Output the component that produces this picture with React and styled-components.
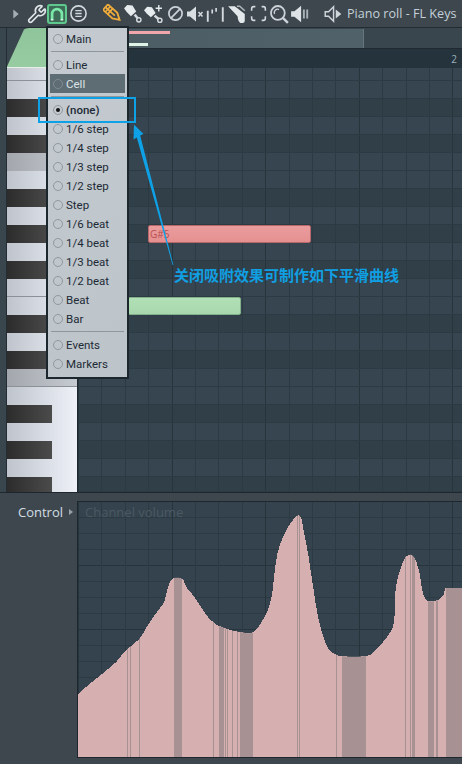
import React from 'react';
import styled, { createGlobalStyle } from 'styled-components';
import { Wrench } from 'lucide-react';

const Global = createGlobalStyle`
  html, body { margin: 0; padding: 0; background: #3d474e; }
  #root { width: 462px; height: 764px; overflow: hidden; }
`;

const Page = styled.div`
  position: relative;
  width: 462px;
  height: 764px;
  overflow: hidden;
  background: #3e474e;
  font-family: "Open Sans", "Noto Sans", sans-serif;
  display: flex;
  flex-direction: column;
`;

/* toolbar */
const Toolbar = styled.div`
  height: 27px;
  padding-left: 8px;
  display: flex;
  align-items: center;
  background: #3e474e;
  border-bottom: 1px solid #232c32;
  flex: none;
`;

const Slot = styled.div`
  width: ${p => p.$w}px;
  margin-left: ${p => p.$gap || 0}px;
  height: 20px;
  flex: none;
  display: flex;
  align-items: center;
  justify-content: center;
  color: #dfe5e8;
`;

const MagnetSlot = styled(Slot)`
  box-sizing: border-box;
  height: 20px;
  border: 2px solid #5fc88e;
  border-radius: 3px;
  background: #3d6b58;
`;

const Title = styled.div`
  margin-left: 4px;
  font-size: 12.6px;
  color: #c4d0d8;
  white-space: nowrap;
`;

/* piano roll */
const Roll = styled.div`
  display: flex;
  height: 464px;
  flex: none;
  background: #3a464e;
  border-bottom: 1px solid #1d272d;
`;

const LeftEdge = styled.div`
  width: 6px;
  flex: none;
  border-right: 1px solid #232d33;
  box-sizing: content-box;
`;

const KeyColumn = styled.div`
  width: 70px;
  flex: none;
  display: flex;
  flex-direction: column;
  border-right: 1px solid #1d282e;
`;

const GreenTab = styled.div`
  height: 39px;
  flex: none;
  background: linear-gradient(180deg, #8fc59a, #97cba2);
  border-bottom: 1px solid #e5efe8;
  clip-path: polygon(0 100%, 0 96%, 17px 4%, 19px 1%, 22px 0, 100% 0, 100% 100%);
`;

const Key = styled.div`
  height: ${p => p.$h}px;
  flex: none;
  box-sizing: border-box;
  background: ${p => p.$grey
    ? 'linear-gradient(90deg, #a3a6ad, #c6cad1)'
    : 'linear-gradient(90deg, #bfc4cc, #eef1f8)'};
  border-bottom: ${p => (p.$line ? '1px solid #8c9097' : 'none')};
`;

const BlackKey = styled.div`
  width: 45px;
  height: 100%;
  background: linear-gradient(90deg, #2c2c2c, #4b4b4b);
`;

const RollRight = styled.div`
  flex: 1;
  min-width: 0;
  display: flex;
  flex-direction: column;
`;

const Overview = styled.div`
  height: 19px;
  flex: none;
  margin-top: 1px;
  display: flex;
  flex-direction: column;
  background: linear-gradient(90deg, #4c5c63, #50616a);
  width: 286px;
  border-right: 1px solid #67757c;
  padding-top: 2px;
  box-sizing: border-box;
`;

const OverviewBar = styled.div`
  width: ${p => p.$w}px;
  height: 3px;
  margin-left: 50px;
  margin-top: ${p => p.$top}px;
  background: ${p => p.$color};
`;

const Ruler = styled.div`
  height: 19px;
  flex: none;
  border-top: 1px solid #20292f;
  box-sizing: content-box;
  background: #24333c;
  display: flex;
  justify-content: flex-end;
  align-items: center;
  padding-right: 5px;
  font-size: 10px;
  color: #9db0bd;
`;

const gridLines = `
  repeating-linear-gradient(90deg, #26343c 0 1px, transparent 1px 93.6px),
  repeating-linear-gradient(90deg, #2b3a43 0 1px, transparent 1px 23.4px)
`;

const GridRow = styled.div`
  height: ${p => p.$h}px;
  flex: none;
  box-sizing: border-box;
  display: flex;
  align-items: stretch;
  background-color: ${p => (p.$dark ? '#303f48' : '#36454f')};
  background-image: ${gridLines};
  background-position: 0 0;
  border-bottom: 1px solid #2b3a43;
`;

const Note = styled.div`
  margin-left: ${p => p.$left}px;
  width: ${p => p.$w}px;
  box-sizing: border-box;
  height: 18px;
  padding-left: 1px;
  line-height: 16px;
  font-size: 10px;
  color: #b84f50;
  background: ${p => p.$color};
  border: 1px solid ${p => p.$edge};
  border-radius: 2px;
`;

/* control lane */
const ControlArea = styled.div`
  flex: 1;
  display: flex;
  padding-top: 8px;
  padding-bottom: 6px;
  min-height: 0;
`;

const ControlLabel = styled.div`
  width: 77px;
  flex: none;
  box-sizing: border-box;
  padding: 2px 0 0 18px;
  display: flex;
  align-items: flex-start;
  gap: 6px;
  font-size: 13px;
  line-height: 18px;
  color: #d3dde3;
`;

const Caret = styled.span`
  width: 0;
  height: 0;
  margin-top: 6px;
  border-left: 4px solid #99a2a8;
  border-top: 3.5px solid transparent;
  border-bottom: 3.5px solid transparent;
`;

const Lane = styled.div`
  position: relative;
  flex: 1;
  min-width: 0;
  border-top: 1px solid #1d272d;
  border-left: 1px solid #1d272d;
  border-bottom: 1px solid #1d272d;
  background-color: #34434d;
  background-image:
    repeating-linear-gradient(90deg, #26343c 0 1px, transparent 1px 93.6px),
    repeating-linear-gradient(90deg, #2b3a43 0 1px, transparent 1px 23.4px),
    repeating-linear-gradient(180deg, transparent 0 63px, #26343c 63px 64px),
    repeating-linear-gradient(180deg, transparent 0 15px, #2b3a43 15px 16px);
  background-position: 0 0, 0 0, 0 0, 0 0;
`;

const LaneName = styled.div`
  position: absolute;
  left: 7px;
  top: 0;
  font-size: 13px;
  line-height: 20px;
  color: #4b5963;
`;

const Curve = styled.svg`
  position: absolute;
  left: 0;
  top: 0;
  width: 100%;
  height: 100%;
  display: block;
  shape-rendering: crispEdges;
`;

/* snap menu */
const Menu = styled.div`
  position: absolute;
  left: 46px;
  top: 26px;
  width: 83px;
  height: 353px;
  box-sizing: border-box;
  padding: 1px 2px;
  border: 2px solid #1c272d;
  background: linear-gradient(135deg, #c4cad0, #bcc4ca);
`;

const MenuItem = styled.div`
  height: 19px;
  display: flex;
  align-items: center;
  padding-left: 3px;
  gap: 3px;
  font-family: Roboto, "Open Sans", sans-serif;
  font-size: 11.5px;
  color: ${p => (p.$active ? '#dbe3e8' : '#1d2a35')};
  background: ${p => (p.$active ? '#5e6c73' : 'transparent')};
  font-weight: ${p => (p.$checked ? 500 : 400)};
`;

const Radio = styled.span`
  width: 8px;
  height: 8px;
  flex: none;
  border: 1px solid ${p => (p.$active ? '#808b91' : '#8f999f')};
  border-radius: 50%;
  display: flex;
  align-items: center;
  justify-content: center;
  &::after {
    content: '';
    display: ${p => (p.$checked ? 'block' : 'none')};
    width: 4px;
    height: 4px;
    border-radius: 50%;
    background: #111;
  }
`;

const MenuRule = styled.div`
  height: 1px;
  margin: 3px 1px;
  background: #8d979d;
`;

/* annotation */
const Highlight = styled.div`
  position: absolute;
  left: 38px;
  top: 97px;
  width: 98px;
  height: 26px;
  box-sizing: border-box;
  border: 2px solid #0ea1e6;
`;

const Arrow = styled.svg`
  position: absolute;
  left: 0;
  top: 0;
  width: 462px;
  height: 764px;
  pointer-events: none;
`;

const Callout = styled.div`
  position: absolute;
  left: 174px;
  top: 265px;
  font-family: "Noto Sans CJK SC", sans-serif;
  font-weight: 700;
  font-size: 15px;
  line-height: 20px;
  color: #109fe2;
  white-space: nowrap;
`;

const rows = [
  [13], [18], [18, 'b'], [18], [18, 'b'], [18, 'g'], [18], [18, 'b'], [18], [18, 'b'], [18], [18, 'b'],
  [18, 'l'], [18], [18, 'b'], [18], [18, 'b'], [18, 'gl'], [18], [18, 'b'], [18], [18, 'b'], [18], [15, 'b'],
];

const menu = [
  { label: 'Main' }, { rule: true }, { label: 'Line' }, { label: 'Cell', active: true }, { rule: true },
  { label: '(none)', checked: true }, { label: '1/6 step' }, { label: '1/4 step' }, { label: '1/3 step' }, { label: '1/2 step' },
  { label: 'Step' }, { label: '1/6 beat' }, { label: '1/4 beat' }, { label: '1/3 beat' }, { label: '1/2 beat' },
  { label: 'Beat' }, { label: 'Bar' }, { rule: true }, { label: 'Events' }, { label: 'Markers' },
];

// curve outline in page coordinates, lane origin is 79,502
const curve = [
  [78, 695], [87, 687], [98, 678], [117, 662], [125, 652], [140, 639], [147, 628], [157, 613], [165, 602],
  [168, 590], [173, 579], [183, 579], [187, 587], [195, 597], [207, 615], [215, 623], [220, 626], [231, 630],
  [241, 632], [254, 632], [266, 615], [272, 597], [275, 573], [278, 553], [283, 538], [288, 528], [296, 517],
  [301, 517], [304, 530], [309, 557], [314, 590], [319, 620], [326, 643], [331, 651], [341, 656], [366, 656],
  [376, 650], [393, 627], [395, 597], [398, 578], [404, 560], [409, 555], [414, 557], [419, 570], [423, 593],
  [428, 601], [438, 600], [444, 595],
];

const smoothPath = pts => {
  const p = pts.map(([x, y]) => [x - 79, y - 502]);
  let d = `M${p[0][0]} ${p[0][1]}`;
  for (let i = 0; i < p.length - 1; i++) {
    const a = p[Math.max(i - 1, 0)];
    const b = p[i];
    const c = p[i + 1];
    const e = p[Math.min(i + 2, p.length - 1)];
    d += ` C${b[0] + (c[0] - a[0]) / 6} ${b[1] + (c[1] - a[1]) / 6} ${c[0] - (e[0] - b[0]) / 6} ${c[1] - (e[1] - b[1]) / 6} ${c[0]} ${c[1]}`;
  }
  return `${d} L366 86 L383 86 L383 255 L-1 255 Z`;
};
const curvePath = smoothPath(curve);

const bands = [
  [128, 1], [131, 1], [140, 1], [175, 8], [214, 1], [220, 5], [226, 1], [228, 1], [233, 1], [238, 1], [241, 13],
  [297, 1], [299, 1], [336, 1], [342, 24], [405, 1], [410, 1], [412, 3], [428, 6], [436, 2], [446, 16],
];

const Icon = ({ children, size = 20 }) => (
  <svg width={size} height={size} viewBox="0 0 18 18">{children}</svg>
);

function App() {
  return (
    <Page>
      <Global />
      <Toolbar>
        <Slot $w={16}>
          <Icon size={16}><path d="M6 4 L12 9 L6 14 Z" fill="#a3adb3" /></Icon>
        </Slot>
        <Slot $w={20} $gap={3}><Wrench size={20} strokeWidth={2} /></Slot>
        <MagnetSlot $w={20}>
          <Icon size={16}>
            <path d="M3.5 15 V9 a5.5 5.5 0 0 1 11 0 V15" fill="none" stroke="#7be8a9" strokeWidth="3" />
            <path d="M2 15.5 h3 M13 15.5 h3" stroke="#d6fbe4" strokeWidth="1.6" />
          </Icon>
        </MagnetSlot>
        <Slot $w={20} $gap={1}>
          <Icon size={19}>
            <circle cx="9" cy="9" r="7.2" fill="none" stroke="#d2d9de" strokeWidth="1.5" />
            <path d="M6 6.3 h6 M6 9 h6 M6 11.7 h6" stroke="#d2d9de" strokeWidth="1.2" />
          </Icon>
        </Slot>
        <Slot $w={20} $gap={14}>
          <Icon size={19}>
            <g transform="rotate(42 9 9)" fill="none" stroke="#f0ac3a" strokeWidth="1.7">
              <path d="M0 5.5 H12 L18 9 L12 12.5 H0 Z" />
              <path d="M3 5.5 V12.5 M6 5.5 V12.5 M0 9 H12" />
            </g>
          </Icon>
        </Slot>
        <Slot $w={20}>
          <Icon size={19}>
            <path d="M1 4 L4 1 L9 1.5 L12.5 7 L7.5 11.5 L3.5 7.5 Z" fill="#e6ebee" />
            <path d="M11 10 L14 13.5" stroke="#d4dade" strokeWidth="2.4" />
            <circle cx="15" cy="15" r="2" fill="none" stroke="#d4dade" strokeWidth="1.4" />
          </Icon>
        </Slot>
        <Slot $w={22}>
          <Icon size={19}>
            <path d="M0 6 L3 2.5 L7.5 3 L11 8.5 L6.5 12.5 L2.5 9 Z" fill="#e6ebee" />
            <path d="M10 11 L13.5 14" stroke="#d4dade" strokeWidth="2.4" />
            <circle cx="15" cy="15.5" r="2" fill="none" stroke="#d4dade" strokeWidth="1.4" />
            <path d="M14 1 V7 M11 4 H17" stroke="#e6ebee" strokeWidth="1.3" />
          </Icon>
        </Slot>
        <Slot $w={22}>
          <Icon size={17}>
            <circle cx="9" cy="9" r="7" fill="none" stroke="#ccd3d8" strokeWidth="1.8" />
            <path d="M4.2 13.8 L13.8 4.2" stroke="#ccd3d8" strokeWidth="1.8" />
          </Icon>
        </Slot>
        <Slot $w={18}>
          <Icon size={20}>
            <path d="M1 6.5 H4 L10 1.5 V16.5 L4 11.5 H1 Z" fill="#d8dee1" />
            <path d="M12.5 7 L16.5 11.5 M16.5 7 L12.5 11.5" stroke="#d4dade" strokeWidth="1.5" />
          </Icon>
        </Slot>
        <Slot $w={22}>
          <Icon size={20}>
            <path d="M2.5 6 V16 M16 3 V16" stroke="#d4dade" strokeWidth="1.7" />
            <path d="M6.5 5 V8.5 M10 3.5 V7" stroke="#d4dade" strokeWidth="1.5" />
          </Icon>
        </Slot>
        <Slot $w={22}>
          <Icon size={20}>
            <path d="M1 2 H7 L16 9 V15 Q16 17 14 17 H12 Q10 16 9.5 11 Z" fill="#e3e8eb" />
            <path d="M9 2 L11.5 2 L16 6" fill="none" stroke="#aeb7bc" strokeWidth="1.3" />
          </Icon>
        </Slot>
        <Slot $w={20}>
          <Icon size={19}>
            <path d="M6 2.5 H4.5 Q2.5 2.5 2.5 4.5 V6.5 M12 2.5 H13.5 Q15.5 2.5 15.5 4.5 V6.5 M6 15.5 H4.5 Q2.5 15.5 2.5 13.5 V11.5 M12 15.5 H13.5 Q15.5 15.5 15.5 13.5 V11.5" fill="none" stroke="#d4dade" strokeWidth="1.5" />
          </Icon>
        </Slot>
        <Slot $w={22}>
          <Icon size={20}>
            <circle cx="8" cy="8" r="6.2" fill="none" stroke="#ccd3d8" strokeWidth="1.6" />
            <path d="M5 9 A3 3 0 0 1 9 5" fill="none" stroke="#ccd3d8" strokeWidth="1.2" />
            <path d="M12.5 12.5 L17 17" stroke="#ccd3d8" strokeWidth="2.2" />
          </Icon>
        </Slot>
        <Slot $w={20}>
          <Icon size={20}>
            <path d="M1 6.5 H4 L10 1.5 V16.5 L4 11.5 H1 Z" fill="#dce2e5" />
            <path d="M12.5 5 V13 M15.5 5 V13" stroke="#a9b2b7" strokeWidth="1.7" />
          </Icon>
        </Slot>
        <Slot $w={20} $gap={13}>
          <Icon size={20}>
            <path d="M2 7 H5 L9.5 2.5 V15.5 L5 11 H2 Z" fill="none" stroke="#cfd6da" strokeWidth="1.3" />
            <path d="M11.5 5 L16.5 9 L11.5 13 Z" fill="#cfd6da" />
          </Icon>
        </Slot>
        <Title>Piano roll - FL Keys</Title>
      </Toolbar>

      <Roll>
        <LeftEdge />
        <KeyColumn>
          <GreenTab />
          {rows.map(([h, kind], i) => (
            <Key key={i} $h={h} $grey={kind && kind[0] === 'g'} $line={i === 0 || kind === 'l' || kind === 'gl'}>
              {kind === 'b' && <BlackKey />}
            </Key>
          ))}
        </KeyColumn>
        <RollRight>
          <Overview>
            <OverviewBar $w={42} $top={0} $color="#f0a6ab" />
            <OverviewBar $w={20} $top={9} $color="#dff4e6" />
          </Overview>
          <Ruler>2</Ruler>
          {rows.map(([h, kind], i) => (
            <GridRow key={i} $h={h} $dark={kind === 'b'}>
              {i === 9 && (
                <Note $left={70} $w={163} $color="linear-gradient(180deg, #ea9c9d, #e59091)" $edge="#b5676a">G#5</Note>
              )}
              {i === 13 && (
                <Note $left={50} $w={113} $color="linear-gradient(180deg, #b2e0b6, #a8d8ad)" $edge="#82b18c" />
              )}
            </GridRow>
          ))}
        </RollRight>
      </Roll>

      <ControlArea>
        <ControlLabel>Control<Caret /></ControlLabel>
        <Lane>
          <LaneName>Channel volume</LaneName>
          <Curve viewBox="0 0 383 255" preserveAspectRatio="none">
            <defs>
              <clipPath id="under-curve"><path d={curvePath} /></clipPath>
            </defs>
            <path d={curvePath} fill="#dcb4b5" fillOpacity="0.97" />
            <g clipPath="url(#under-curve)">
              {bands.map(([x, w]) => (
                <rect key={x} x={x - 79} y={0} width={w} height={255} fill="#a58f90" fillOpacity="0.95" />
              ))}
            </g>
          </Curve>
        </Lane>
      </ControlArea>

      <Menu>
        {menu.map((item, i) => item.rule
          ? <MenuRule key={i} />
          : (
            <MenuItem key={i} $active={item.active} $checked={item.checked}>
              <Radio $active={item.active} $checked={item.checked} />
              {item.label}
            </MenuItem>
          ))}
      </Menu>

      <Highlight />
      <Arrow viewBox="0 0 462 764">
        <polygon points="134,124.5 143.5,134 140.2,135.5 173.4,265 172.6,265 136.8,137.5 133.5,139.5" fill="#0ea1e6" />
      </Arrow>
      <Callout>关闭吸附效果可制作如下平滑曲线</Callout>
    </Page>
  );
}

export default App;
